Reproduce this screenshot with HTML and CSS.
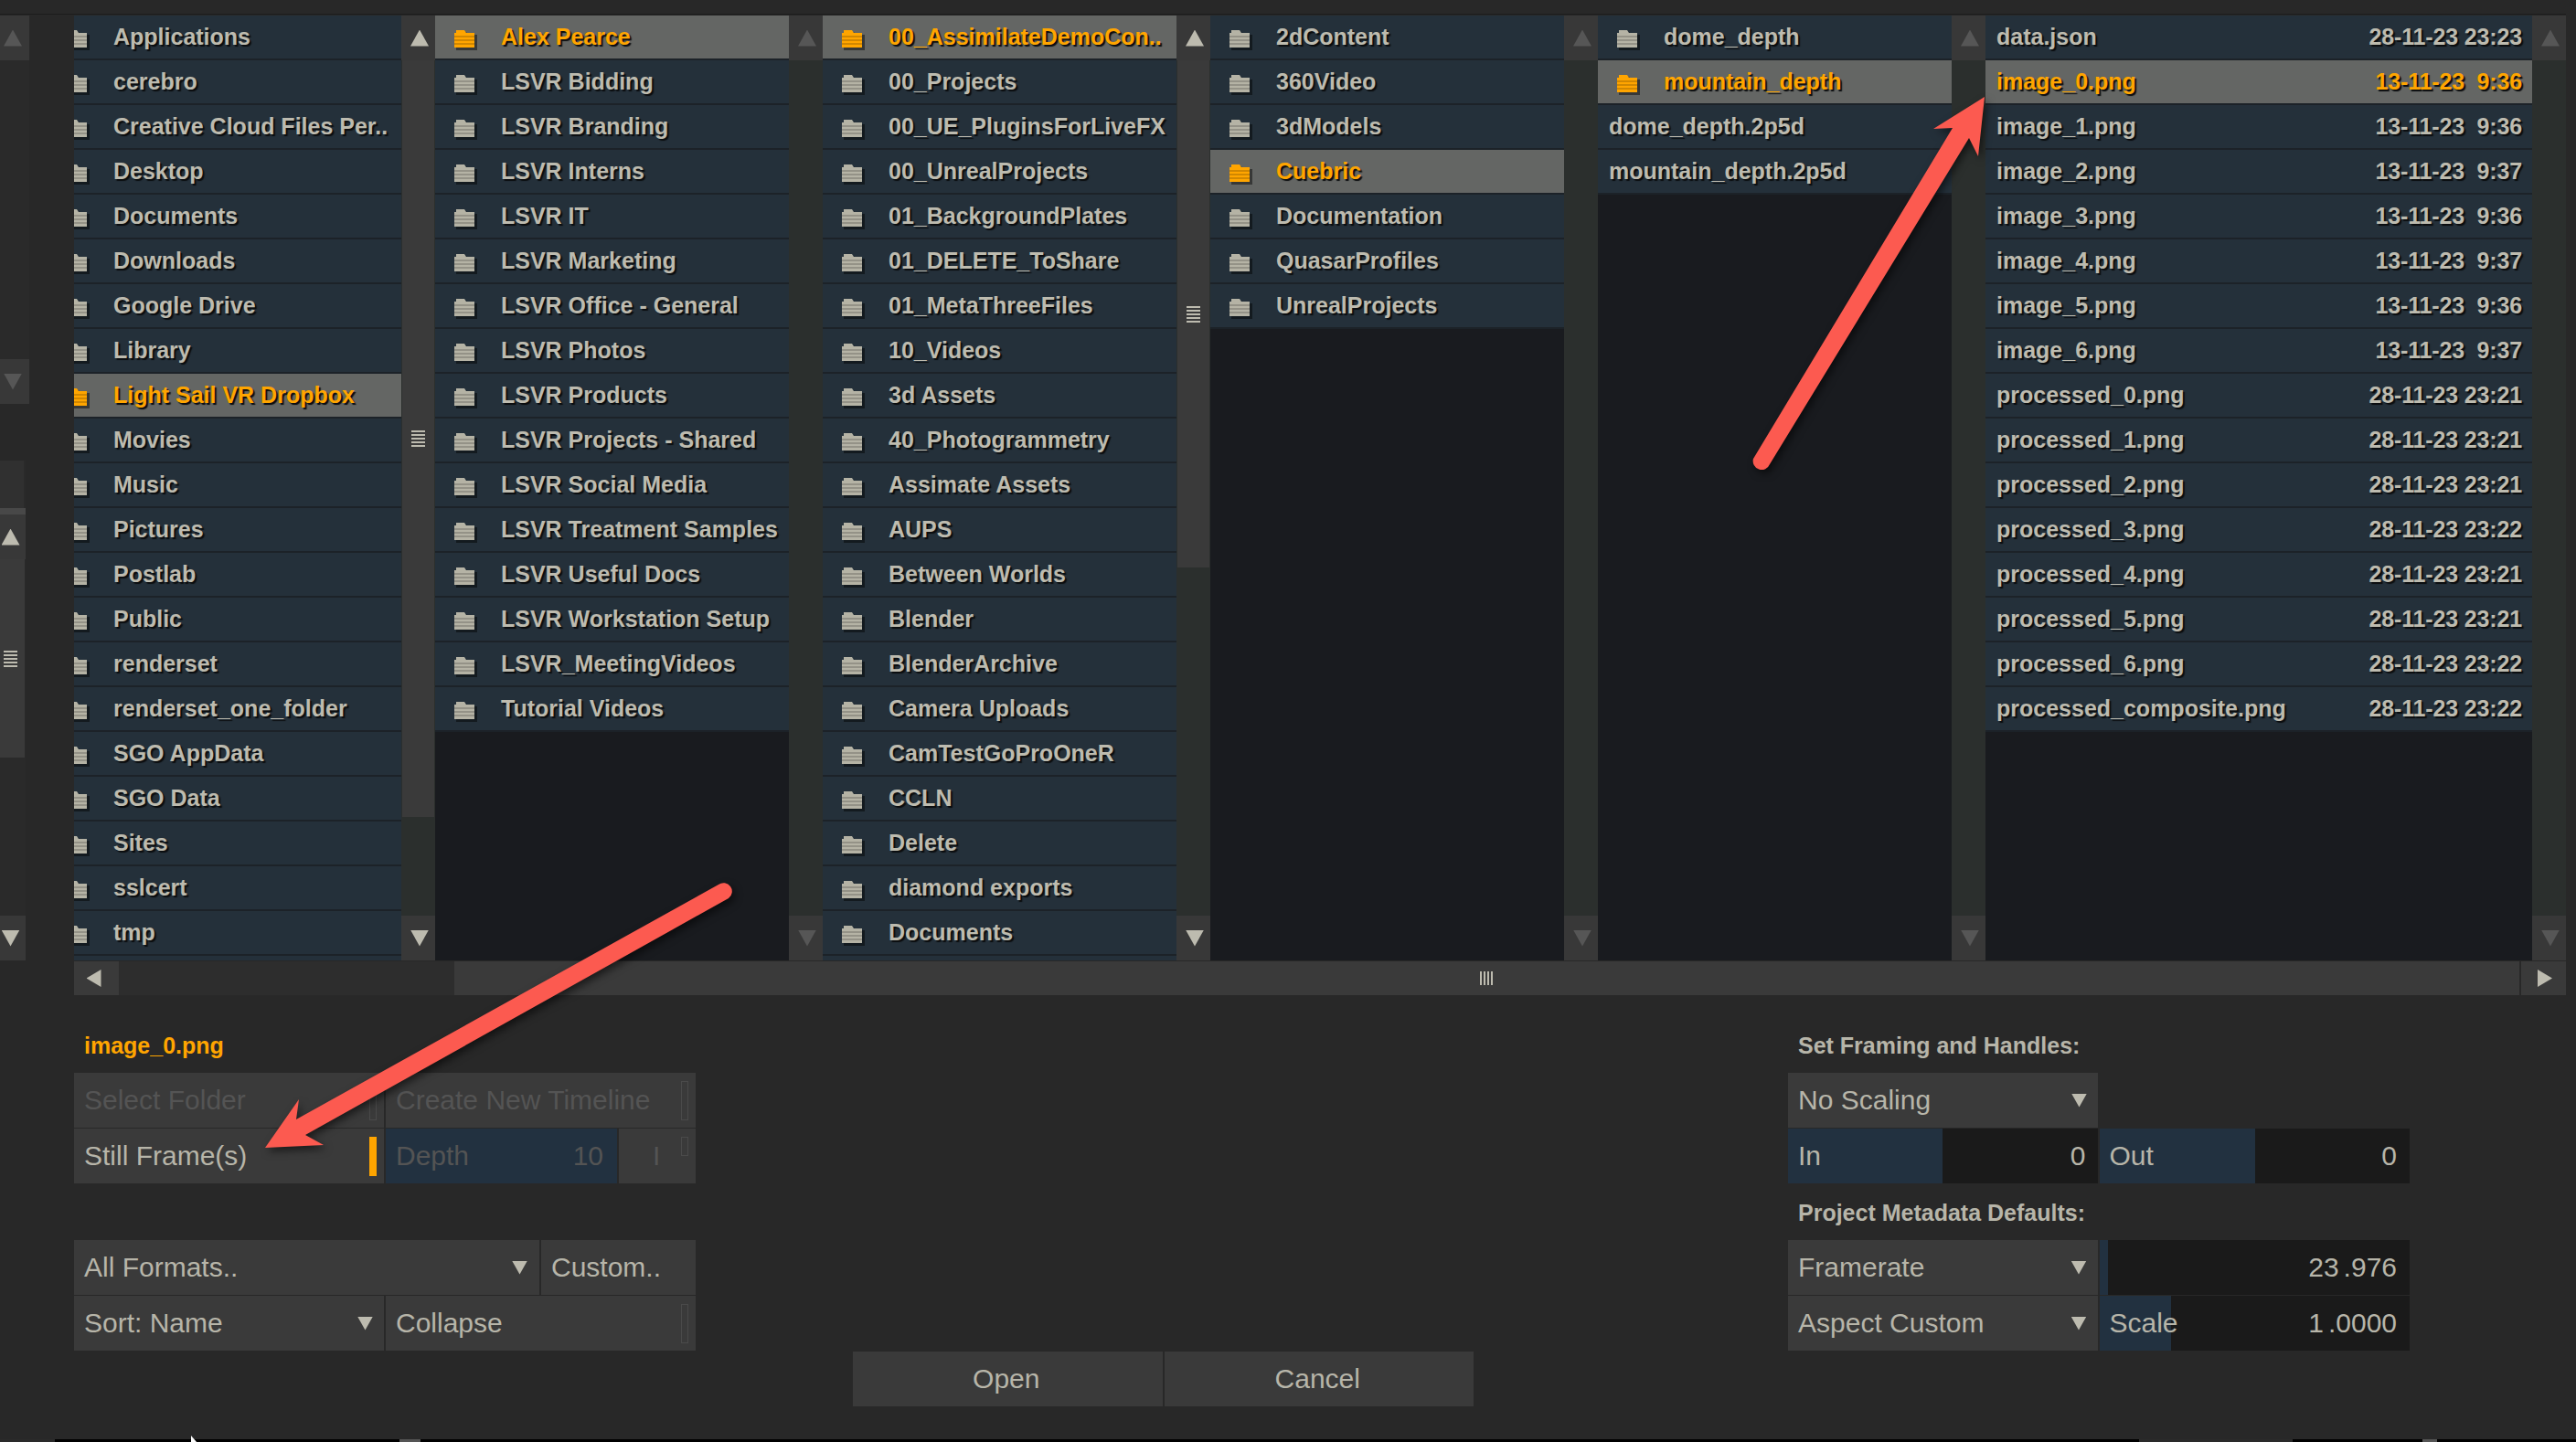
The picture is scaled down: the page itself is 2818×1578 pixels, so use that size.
FILE: index.html
```html
<!DOCTYPE html>
<html lang="en">
<head>
    <meta charset="UTF-8">
    <title>Open</title>
    <link rel="stylesheet" href="styles.css">
</head>
<body>
    <svg class="defs" width="0" height="0">
        <symbol id="folder" viewBox="0 0 28 22">
            <path class="folder-shadow" d="M6 2h9l2 3h10v17H4V5h2z"/>
            <path fill="currentColor" d="M4 0h9l2 3h9v16H2V3h2z"/>
            <path class="folder-line" d="M2 6h22v2H2zM2 10h22v2H2zM2 14h22v2H2z"/>
        </symbol>
    </svg>

    <div class="browser">
        <div class="side">
            <div class="vbar side-top">
                <div class="vbtn"><i class="tri up dim"></i></div>
                <div class="track"></div>
                <div class="vbtn"><i class="tri down dim"></i></div>
            </div>
            <div class="vbar side-bottom">
                <div class="side-stub"></div>
                <div class="side-strip"></div>
                <div class="vbtn"><i class="tri up"></i></div>
                <div class="thumb side-thumb"><i class="grip"></i></div>
                <div class="track"></div>
                <div class="vbtn"><i class="tri down"></i></div>
            </div>
        </div>

        <div class="pane">
            <ul class="list shifted">
                <li class="row"><svg class="ico"><use href="#folder"/></svg><span>Applications</span></li>
                <li class="row"><svg class="ico"><use href="#folder"/></svg><span>cerebro</span></li>
                <li class="row"><svg class="ico"><use href="#folder"/></svg><span>Creative Cloud Files Per..</span></li>
                <li class="row"><svg class="ico"><use href="#folder"/></svg><span>Desktop</span></li>
                <li class="row"><svg class="ico"><use href="#folder"/></svg><span>Documents</span></li>
                <li class="row"><svg class="ico"><use href="#folder"/></svg><span>Downloads</span></li>
                <li class="row"><svg class="ico"><use href="#folder"/></svg><span>Google Drive</span></li>
                <li class="row"><svg class="ico"><use href="#folder"/></svg><span>Library</span></li>
                <li class="row active"><svg class="ico"><use href="#folder"/></svg><span>Light Sail VR Dropbox</span></li>
                <li class="row"><svg class="ico"><use href="#folder"/></svg><span>Movies</span></li>
                <li class="row"><svg class="ico"><use href="#folder"/></svg><span>Music</span></li>
                <li class="row"><svg class="ico"><use href="#folder"/></svg><span>Pictures</span></li>
                <li class="row"><svg class="ico"><use href="#folder"/></svg><span>Postlab</span></li>
                <li class="row"><svg class="ico"><use href="#folder"/></svg><span>Public</span></li>
                <li class="row"><svg class="ico"><use href="#folder"/></svg><span>renderset</span></li>
                <li class="row"><svg class="ico"><use href="#folder"/></svg><span>renderset_one_folder</span></li>
                <li class="row"><svg class="ico"><use href="#folder"/></svg><span>SGO AppData</span></li>
                <li class="row"><svg class="ico"><use href="#folder"/></svg><span>SGO Data</span></li>
                <li class="row"><svg class="ico"><use href="#folder"/></svg><span>Sites</span></li>
                <li class="row"><svg class="ico"><use href="#folder"/></svg><span>sslcert</span></li>
                <li class="row"><svg class="ico"><use href="#folder"/></svg><span>tmp</span></li>
                <li class="row"></li>
            </ul>
        </div>
        <div class="vbar">
            <div class="vbtn"><i class="tri up"></i></div>
            <div class="thumb thumb-a"><i class="grip"></i></div>
            <div class="track"></div>
            <div class="vbtn"><i class="tri down"></i></div>
        </div>

        <div class="pane">
            <ul class="list">
                <li class="row active"><svg class="ico"><use href="#folder"/></svg><span>Alex Pearce</span></li>
                <li class="row"><svg class="ico"><use href="#folder"/></svg><span>LSVR Bidding</span></li>
                <li class="row"><svg class="ico"><use href="#folder"/></svg><span>LSVR Branding</span></li>
                <li class="row"><svg class="ico"><use href="#folder"/></svg><span>LSVR Interns</span></li>
                <li class="row"><svg class="ico"><use href="#folder"/></svg><span>LSVR IT</span></li>
                <li class="row"><svg class="ico"><use href="#folder"/></svg><span>LSVR Marketing</span></li>
                <li class="row"><svg class="ico"><use href="#folder"/></svg><span>LSVR Office - General</span></li>
                <li class="row"><svg class="ico"><use href="#folder"/></svg><span>LSVR Photos</span></li>
                <li class="row"><svg class="ico"><use href="#folder"/></svg><span>LSVR Products</span></li>
                <li class="row"><svg class="ico"><use href="#folder"/></svg><span>LSVR Projects - Shared</span></li>
                <li class="row"><svg class="ico"><use href="#folder"/></svg><span>LSVR Social Media</span></li>
                <li class="row"><svg class="ico"><use href="#folder"/></svg><span>LSVR Treatment Samples</span></li>
                <li class="row"><svg class="ico"><use href="#folder"/></svg><span>LSVR Useful Docs</span></li>
                <li class="row"><svg class="ico"><use href="#folder"/></svg><span>LSVR Workstation Setup</span></li>
                <li class="row"><svg class="ico"><use href="#folder"/></svg><span>LSVR_MeetingVideos</span></li>
                <li class="row"><svg class="ico"><use href="#folder"/></svg><span>Tutorial Videos</span></li>
            </ul>
        </div>
        <div class="vbar">
            <div class="vbtn"><i class="tri up dim"></i></div>
            <div class="track"></div>
            <div class="vbtn"><i class="tri down dim"></i></div>
        </div>

        <div class="pane">
            <ul class="list">
                <li class="row active"><svg class="ico"><use href="#folder"/></svg><span>00_AssimilateDemoCon..</span></li>
                <li class="row"><svg class="ico"><use href="#folder"/></svg><span>00_Projects</span></li>
                <li class="row"><svg class="ico"><use href="#folder"/></svg><span>00_UE_PluginsForLiveFX</span></li>
                <li class="row"><svg class="ico"><use href="#folder"/></svg><span>00_UnrealProjects</span></li>
                <li class="row"><svg class="ico"><use href="#folder"/></svg><span>01_BackgroundPlates</span></li>
                <li class="row"><svg class="ico"><use href="#folder"/></svg><span>01_DELETE_ToShare</span></li>
                <li class="row"><svg class="ico"><use href="#folder"/></svg><span>01_MetaThreeFiles</span></li>
                <li class="row"><svg class="ico"><use href="#folder"/></svg><span>10_Videos</span></li>
                <li class="row"><svg class="ico"><use href="#folder"/></svg><span>3d Assets</span></li>
                <li class="row"><svg class="ico"><use href="#folder"/></svg><span>40_Photogrammetry</span></li>
                <li class="row"><svg class="ico"><use href="#folder"/></svg><span>Assimate Assets</span></li>
                <li class="row"><svg class="ico"><use href="#folder"/></svg><span>AUPS</span></li>
                <li class="row"><svg class="ico"><use href="#folder"/></svg><span>Between Worlds</span></li>
                <li class="row"><svg class="ico"><use href="#folder"/></svg><span>Blender</span></li>
                <li class="row"><svg class="ico"><use href="#folder"/></svg><span>BlenderArchive</span></li>
                <li class="row"><svg class="ico"><use href="#folder"/></svg><span>Camera Uploads</span></li>
                <li class="row"><svg class="ico"><use href="#folder"/></svg><span>CamTestGoProOneR</span></li>
                <li class="row"><svg class="ico"><use href="#folder"/></svg><span>CCLN</span></li>
                <li class="row"><svg class="ico"><use href="#folder"/></svg><span>Delete</span></li>
                <li class="row"><svg class="ico"><use href="#folder"/></svg><span>diamond exports</span></li>
                <li class="row"><svg class="ico"><use href="#folder"/></svg><span>Documents</span></li>
                <li class="row"></li>
            </ul>
        </div>
        <div class="vbar">
            <div class="vbtn"><i class="tri up"></i></div>
            <div class="thumb thumb-b"><i class="grip"></i></div>
            <div class="track"></div>
            <div class="vbtn"><i class="tri down"></i></div>
        </div>

        <div class="pane">
            <ul class="list">
                <li class="row"><svg class="ico"><use href="#folder"/></svg><span>2dContent</span></li>
                <li class="row"><svg class="ico"><use href="#folder"/></svg><span>360Video</span></li>
                <li class="row"><svg class="ico"><use href="#folder"/></svg><span>3dModels</span></li>
                <li class="row active"><svg class="ico"><use href="#folder"/></svg><span>Cuebric</span></li>
                <li class="row"><svg class="ico"><use href="#folder"/></svg><span>Documentation</span></li>
                <li class="row"><svg class="ico"><use href="#folder"/></svg><span>QuasarProfiles</span></li>
                <li class="row"><svg class="ico"><use href="#folder"/></svg><span>UnrealProjects</span></li>
            </ul>
        </div>
        <div class="vbar">
            <div class="vbtn"><i class="tri up dim"></i></div>
            <div class="track"></div>
            <div class="vbtn"><i class="tri down dim"></i></div>
        </div>

        <div class="pane">
            <ul class="list">
                <li class="row"><svg class="ico"><use href="#folder"/></svg><span>dome_depth</span></li>
                <li class="row active"><svg class="ico"><use href="#folder"/></svg><span>mountain_depth</span></li>
                <li class="row file"><span>dome_depth.2p5d</span></li>
                <li class="row file"><span>mountain_depth.2p5d</span></li>
            </ul>
        </div>
        <div class="vbar">
            <div class="vbtn"><i class="tri up dim"></i></div>
            <div class="track"></div>
            <div class="vbtn"><i class="tri down dim"></i></div>
        </div>

        <div class="pane">
            <ul class="list">
                <li class="row file"><span>data.json</span><time>28-11-23 23:23</time></li>
                <li class="row file active"><span>image_0.png</span><time>13-11-23  9:36</time></li>
                <li class="row file"><span>image_1.png</span><time>13-11-23  9:36</time></li>
                <li class="row file"><span>image_2.png</span><time>13-11-23  9:37</time></li>
                <li class="row file"><span>image_3.png</span><time>13-11-23  9:36</time></li>
                <li class="row file"><span>image_4.png</span><time>13-11-23  9:37</time></li>
                <li class="row file"><span>image_5.png</span><time>13-11-23  9:36</time></li>
                <li class="row file"><span>image_6.png</span><time>13-11-23  9:37</time></li>
                <li class="row file"><span>processed_0.png</span><time>28-11-23 23:21</time></li>
                <li class="row file"><span>processed_1.png</span><time>28-11-23 23:21</time></li>
                <li class="row file"><span>processed_2.png</span><time>28-11-23 23:21</time></li>
                <li class="row file"><span>processed_3.png</span><time>28-11-23 23:22</time></li>
                <li class="row file"><span>processed_4.png</span><time>28-11-23 23:21</time></li>
                <li class="row file"><span>processed_5.png</span><time>28-11-23 23:21</time></li>
                <li class="row file"><span>processed_6.png</span><time>28-11-23 23:22</time></li>
                <li class="row file"><span>processed_composite.png</span><time>28-11-23 23:22</time></li>
            </ul>
        </div>
        <div class="vbar">
            <div class="vbtn"><i class="tri up dim"></i></div>
            <div class="track"></div>
            <div class="vbtn"><i class="tri down dim"></i></div>
        </div>
    </div>

    <div class="hbar">
        <div class="hbtn hbtn-left"><i class="tri left"></i></div>
        <div class="htrack"></div>
        <div class="hthumb"><i class="grip-h"></i></div>
        <div class="hbtn hbtn-right"><i class="tri right"></i></div>
    </div>

    <div class="form">
        <div class="block">
            <h2 class="filename">image_0.png</h2>
            <div class="group">
                <div class="line">
                    <div class="btn half off">Select Folder<i class="check"></i></div>
                    <div class="btn half off">Create New Timeline<i class="check"></i></div>
                </div>
                <div class="line">
                    <div class="btn half">Still Frame(s)<i class="check on"></i></div>
                    <div class="btn depth off">Depth<em>10</em></div>
                    <div class="btn mini off"><span>I</span><i class="check small"></i></div>
                </div>
            </div>
            <div class="group lower">
                <div class="line">
                    <div class="btn wide">All Formats..<i class="tri drop"></i></div>
                    <div class="btn narrow">Custom..</div>
                </div>
                <div class="line">
                    <div class="btn half">Sort: Name<i class="tri drop"></i></div>
                    <div class="btn half">Collapse<i class="check"></i></div>
                </div>
            </div>
        </div>

        <div class="spacer"></div>

        <div class="actions">
            <div class="btn action">Open</div>
            <div class="btn action">Cancel</div>
        </div>

        <div class="spacer"></div>

        <div class="block">
            <h2>Set Framing and Handles:</h2>
            <div class="group">
                <div class="line">
                    <div class="btn half">No Scaling<i class="tri drop"></i></div>
                </div>
                <div class="line">
                    <div class="slider"><b class="fill" style="width: 169px"></b><span>In</span><em>0</em></div>
                    <div class="slider"><b class="fill" style="width: 170px"></b><span>Out</span><em>0</em></div>
                </div>
            </div>
            <h2 class="second">Project Metadata Defaults:</h2>
            <div class="group">
                <div class="line">
                    <div class="btn half">Framerate<i class="tri drop"></i></div>
                    <div class="slider"><b class="fill" style="width: 9px"></b><span></span><em>23<u>.976</u></em></div>
                </div>
                <div class="line">
                    <div class="btn half">Aspect Custom<i class="tri drop"></i></div>
                    <div class="slider"><b class="fill" style="width: 78px"></b><span>Scale</span><em>1<u>.0000</u></em></div>
                </div>
            </div>
        </div>
    </div>

    <div class="strip">
        <i class="seg seg-a"></i>
        <i class="seg seg-b"></i>
        <i class="seg seg-c"></i>
        <i class="seg seg-d"></i>
    </div>

    <!-- annotations drawn on top of the screenshot -->
    <svg class="marks" viewBox="0 0 2818 1578">
        <g class="arrow">
            <path d="M786 968a9 9 0 0 1 11 15L334 1242l20 11-64 3 37-53-3 22z"/>
            <path d="M1918 502a9.500 9.500 0 0 0 18 6L2154 151l10 20 7-65-56 35 21-1z"/>
        </g>
        <path class="cursor" d="M209 1571v7h6z"/>
    </svg>
</body>
</html>
```

FILE: styles.css
```css
* {box-sizing: border-box;}

html, body {
    margin: 0;
    height: 100%;
    overflow: hidden;
}

body {
    position: relative;
    background-color: #282828;
    color: #b7b5a9;
    font-family: "Liberation Sans", Arial, sans-serif;
    font-size: 30px;
}

.defs {
    position: absolute;
}

ul {
    list-style: none;
    margin: 0;
    padding: 0;
}

i, em, b, u {
    font-style: normal;
    font-weight: normal;
    text-decoration: none;
}

/* file browser */
.browser {
    display: grid;
    grid-template-columns: 81px 358px 37px 387px 37px 387px 37px 387px 37px 387px 37px 598px 37px;
    height: 1036px;
    margin-top: 15px;
    padding-top: 1px;
    border-top: 1px solid #1c1c1c;
    margin-right: 11px;
}

.pane {
    overflow: hidden;
    background-color: #191b1f;
}

.list.shifted {
    margin-left: -29px;
}

.row {
    display: flex;
    align-items: center;
    height: 49px;
    padding-left: 19px;
    background-color: #24303a;
    border-bottom: 2px solid #1c2228;
    font-size: 25px;
    font-weight: bold;
    color: #bdbbaf;
    text-shadow: 2px 2px 1px #0b0d0f;
    white-space: pre;
}

.row.file {
    padding: 0 11px 0 12px;
    justify-content: space-between;
}

.row time {
    letter-spacing: -0.15px;
}

.row.active {
    background-color: #646664;
    color: #ffa500;
}

.ico {
    flex: none;
    width: 28px;
    height: 22px;
    margin: 6px 25px 0 0;
    color: #b5b3a5;
}

.active .ico {
    color: #ffa500;
}

.folder-shadow {
    fill: #000;
    opacity: 0.45;
}

.folder-line {
    fill: #000;
    opacity: 0.18;
}

/* scrollbars */
.vbar {
    display: flex;
    flex-direction: column;
    background-color: #2b2f2d;
}

.vbtn {
    flex: none;
    display: flex;
    align-items: center;
    justify-content: center;
    height: 49px;
    padding-left: 3px;
    background-color: #383838;
}

.track {
    flex: 1;
}

.thumb {
    flex: none;
    display: flex;
    align-items: center;
    justify-content: center;
    margin: 0 1px;
    background-color: #3a3a3a;
}

.thumb-a {
    height: 828px;
}

.thumb-b {
    height: 555px;
}

.grip {
    width: 15px;
    height: 18px;
    background: repeating-linear-gradient(#bdbbaf 0 2px, transparent 2px 4px);
}

.tri {
    display: block;
    flex: none;
    background-color: #bdbbaf;
}

.tri.dim {
    background-color: #565656;
}

.tri.up {
    width: 20px;
    height: 18px;
    clip-path: polygon(50% 0, 100% 100%, 0 100%);
}

.tri.down {
    width: 20px;
    height: 18px;
    clip-path: polygon(0 0, 100% 0, 50% 100%);
}

.tri.left {
    width: 16px;
    height: 19px;
    clip-path: polygon(100% 0, 100% 100%, 0 50%);
}

.tri.right {
    width: 16px;
    height: 19px;
    clip-path: polygon(0 0, 100% 50%, 0 100%);
}

.tri.drop {
    width: 17px;
    height: 15px;
    margin-left: auto;
    clip-path: polygon(0 0, 100% 0, 50% 100%);
}

/* bars at the far left, left over from the window behind */
.side {
    display: flex;
    flex-direction: column;
    justify-content: space-between;
}

.side .vbar {
    background-color: #2a2a2a;
}

.side-top {
    width: 32px;
    height: 425px;
}

.side-bottom {
    width: 28px;
    height: 547px;
}

.side-stub {
    flex: none;
    width: 26px;
    height: 52px;
    background-color: #303030;
}

.side-strip {
    flex: none;
    height: 7px;
    background-color: #484848;
}

.side-bottom .vbtn {
    padding: 0 5px 0 0;
}

.side-top .vbtn {
    padding: 0 4px 0 0;
}

.thumb.side-thumb {
    height: 217px;
    margin: 0 1px 0 0;
    padding-right: 4px;
}

.hbar {
    display: flex;
    height: 37px;
    margin: 1px 11px 0 81px;
}

.hbtn {
    flex: none;
    display: flex;
    align-items: center;
    justify-content: center;
    width: 49px;
    background-color: #3a3a3a;
}

.hbtn-left {
    padding-right: 6px;
}

.hbtn-right {
    padding-left: 3px;
}

.htrack {
    flex: none;
    width: 367px;
    background-color: #2d2d2d;
}

.hthumb {
    flex: 1;
    display: flex;
    align-items: center;
    justify-content: center;
    margin-right: 2px;
    background-color: #3a3a3a;
}

.grip-h {
    width: 15px;
    height: 15px;
    background: repeating-linear-gradient(90deg, #bdbbaf 0 2px, transparent 2px 4px);
}

/* form below the browser */
.form {
    display: grid;
    grid-template-columns: 680px 172px 679px 344px 680px;
    height: 450px;
    margin-left: 81px;
}

h2 {
    margin: 38px 0 13px 11px;
    font-size: 25px;
    line-height: 34px;
    font-weight: bold;
}

h2.filename {
    color: #ffa500;
}

h2.second {
    margin-top: 15px;
}

.group {
    display: flex;
    flex-direction: column;
    gap: 1px;
}

.group.lower {
    margin-top: 62px;
}

.line {
    display: flex;
    gap: 2px;
}

.btn {
    display: flex;
    align-items: center;
    height: 60px;
    padding: 0 8px 0 11px;
    background-color: #3a3a3a;
}

.btn.off {
    color: #545454;
}

.half {
    width: 339px;
}

.wide {
    width: 509px;
    padding-right: 13px;
}

.narrow {
    width: 169px;
}

.half .drop {
    margin-right: 4px;
}

.check {
    flex: none;
    width: 8px;
    height: 43px;
    margin-left: auto;
    border: 1px solid #4a4a4a;
}

.check.on {
    background-color: #ffa500;
    border-color: #ffa500;
}

.check.small {
    height: 21px;
    align-self: flex-start;
    margin-top: 9px;
}

.btn.depth {
    width: 253px;
    background-color: #223140;
}

.depth em {
    margin-left: auto;
    padding-right: 7px;
}

.btn.mini {
    width: 84px;
}

.mini span {
    margin-left: 26px;
}

.actions {
    align-self: end;
    display: flex;
    gap: 2px;
}

.btn.action {
    flex: 1;
    justify-content: center;
    padding: 0 11px 0 8px;
}

.slider {
    position: relative;
    display: flex;
    align-items: center;
    justify-content: space-between;
    width: 340px;
    height: 60px;
    padding: 0 14px 0 11px;
    background-color: #1a1a1a;
}

.slider:first-child {
    width: 339px;
    padding-right: 13px;
}

.fill {
    position: absolute;
    top: 0;
    bottom: 0;
    left: 0;
    background-color: #223140;
}

.slider span, .slider em {
    position: relative;
}

.slider u {
    margin-left: 5px;
}

/* bottom edge of the desktop behind the dialog */
.strip {
    display: flex;
    height: 3px;
    margin-top: 36px;
    background-color: #000;
}

.seg {
    display: block;
    background-color: #2a2a2a;
}

.seg-a {
    width: 60px;
    margin-right: 377px;
}

.seg-b {
    width: 23px;
    margin-right: 1880px;
    background-color: #555;
}

.seg-c {
    width: 168px;
    margin-right: 142px;
}

.seg-d {
    width: 16px;
    background-color: #555;
}

/* red arrows */
.marks {
    position: absolute;
    top: 0;
    left: 0;
    width: 2818px;
    height: 1578px;
    pointer-events: none;
}

.arrow {
    fill: #fc5a50;
    filter: drop-shadow(3px 4px 4px rgba(0, 0, 0, 0.55));
}

.cursor {
    fill: #fff;
}
```
